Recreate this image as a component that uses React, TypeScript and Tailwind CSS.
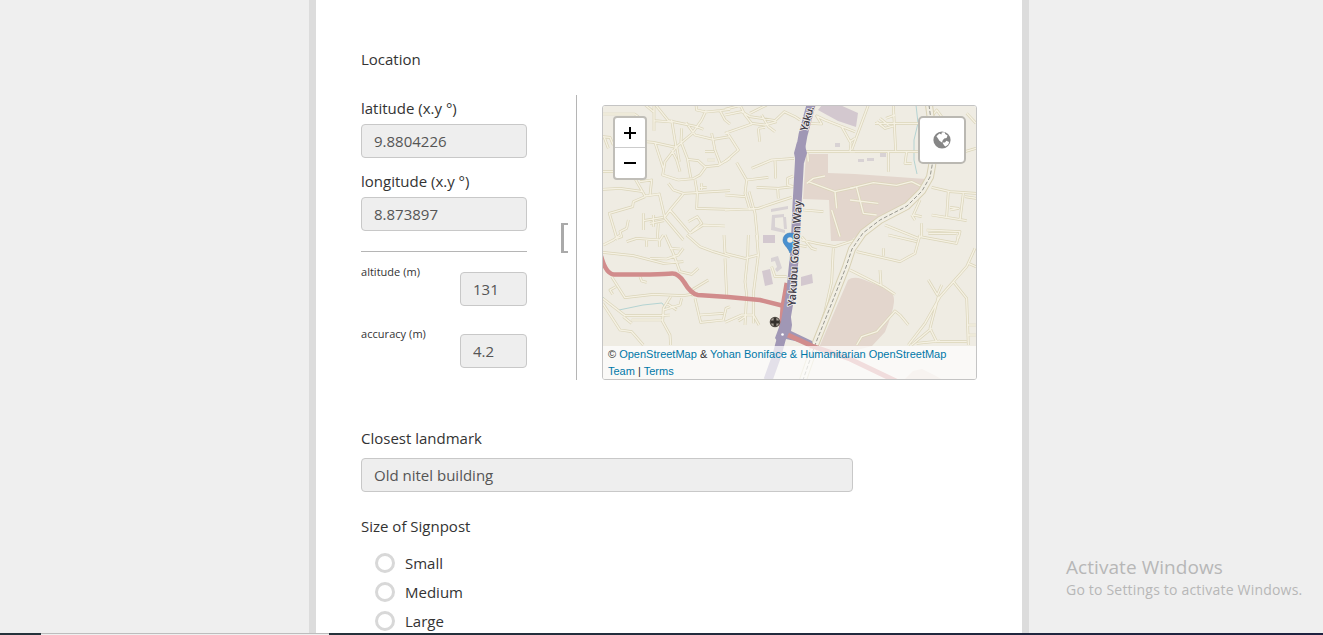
type Tile = { x: number; y: number; roads: string };

// Minor streets, in thirds of a pixel relative to each tile's corner.
const tiles: Tile[] = [
  {
    x: 600,
    y: 100,
    roads:
      "M8 42H104L125 58M162 15V92M136 15L160 35M167 15L205 62L290 80L310 88M162 62L215 66M215 60L228 140M135 125L160 127L228 142L275 102L305 60L318 32M288 15L290 30L318 36L360 32L390 28M360 32L375 60L390 72M258 68L285 105L340 118L390 110M228 142L195 185L188 225L235 240L280 236L300 225L318 200L355 196L390 175M165 128L190 205M245 85L243 125L262 175L272 232M262 178L295 182L315 200M215 150L230 180L240 215M230 140L238 185M335 100L345 150L362 195M315 155H342M322 180H345M8 110L30 112L40 135M12 110L25 145M8 215H42M8 268L60 265L130 275M105 236L135 288L178 282L195 355L250 420M120 245L155 240L150 285M135 290L100 305L98 320L28 340L52 420M205 250L220 270L250 280L390 272M285 240L292 280L290 325L390 328M300 262H320M305 250V270M250 282L210 330L195 350M210 330L270 400M265 365L292 350L305 370L275 395M270 400L310 375L375 378M130 340V390M160 345V380M130 362L190 352M150 370L192 362M175 370L172 415M85 360L80 385L60 395L65 410L50 415",
  },
  {
    x: 725,
    y: 100,
    roads:
      "M0 28L50 15M0 45L50 35L75 50L110 55L150 62L178 35L210 50L225 60M45 15L60 45L80 70L120 75L155 65M110 45L130 80L150 95M100 85L104 125M100 85L120 82M0 100L80 72M5 95L40 150L0 185M125 15L75 40M80 205L140 180L207 175M150 180L152 235M35 188L65 240L130 232M65 240L60 280L75 330M95 262L160 265L205 260M158 265L160 295M0 285L60 290M0 330L100 325L160 305L200 292M72 275L90 340L98 420M205 228L188 235L188 255L205 260M240 155H390M245 250L265 235L300 228M250 245L330 275L390 262M330 275L335 325M250 70L290 72L275 48L300 60L390 95M350 80L378 130L375 155M390 115L375 125M235 330L295 335M248 160L250 185M320 330L345 410",
  },
  {
    x: 850,
    y: 100,
    roads:
      "M55 15L5 150M130 15L137 152M0 155H205M75 70H210M80 65L105 85L130 78M90 55L115 75M108 55L135 45M115 155V215M170 155L165 190L185 190M345 155L378 145M275 50L260 30L245 50M350 40L378 70M0 265L70 248L140 256L185 245L220 262M20 262L40 340L80 345M0 300L85 310M245 262L300 275L378 280M295 275L290 350M340 280L330 360M245 345L350 362M300 322L325 325L300 330M210 300L190 345L215 350M185 345L195 360M105 375L205 415M215 370V410M230 390L330 395L325 415M235 400H320M378 295L345 290",
  },
  {
    x: 600,
    y: 235,
    roads:
      "M8 52L100 62L190 85L250 80M10 30L40 15L60 0M80 20L110 10L180 15L190 0M178 15V35M140 15V35M150 70L200 72L235 60L250 40M195 0L220 55L240 110L275 118L295 100M260 0L300 35L340 50L390 65M375 55L372 0M210 40L240 42M35 125L75 188L160 178L250 182L275 178M275 165L325 135M120 125L125 138L140 142M48 155L30 165L38 178M8 205L60 285L95 290L130 330M8 190L75 242L180 242L210 240M95 255H190M70 245L95 265M212 185L190 220L188 260L210 300L212 330M190 225L240 210L245 190M200 205L230 225M285 190L302 262L370 255L378 220L390 215M300 240L370 235M280 185L275 170",
  },
  {
    x: 725,
    y: 235,
    roads:
      "M0 55L60 70L100 60M70 0L68 65L60 140L65 180L60 270M0 70L5 180M95 0L100 60L85 175L85 265M0 262L50 240L85 240L102 270M40 258L60 245M140 95L150 125L185 125M230 15L275 25L330 35L390 15M325 40L320 140L300 230L270 320M230 5L260 40L275 45M215 30L245 35",
  },
  {
    x: 850,
    y: 235,
    roads:
      "M0 105L100 155L135 178M90 105L93 150M20 50L150 80L195 55L210 0M100 40V62M115 0L200 20M210 5L320 25L325 0M20 330L35 305L80 290L135 228L150 240L175 270M375 40L350 95L270 185L225 265L175 330M310 140L350 190L355 330M235 135L262 180L275 150M265 185L240 280L260 320L350 320M245 280L185 330M200 325L270 318M355 85L378 95M355 270H378M355 300H378",
  },
];

function Streets({ stroke, width }: { stroke: string; width: number }) {
  return (
    <>
      {tiles.map((t) => (
        <path
          key={`${t.x}-${t.y}`}
          d={t.roads}
          transform={`translate(${t.x} ${t.y}) scale(.33333)`}
          stroke={stroke}
          strokeWidth={width}
          strokeLinejoin="round"
          fill="none"
        />
      ))}
    </>
  );
}

const railway =
  "M929 105L931 120L934 150L932 166L930 177L922 191L907 206L880 220L863 233L852 249L846 267L833 300L815 345L803 380";
const highway = "M811 105L803 135L800 152L797 205L795 250L791 290L785 325L777 355L768 380";

function StreetMap() {
  return (
    <svg viewBox="603 106 373 273" className="block h-full w-full">
      <rect x="602" y="105" width="376" height="276" fill="#efece3" />
      <path
        d="M806 154H828V173L855 174L926 179L915 196L895 213L870 226L850 241H831L829 200L803 199Z"
        fill="#e3d6cd"
      />
      <path d="M848 280Q853 276 862 279L882 287Q895 291 894 302Q893 312 885 332L872 346L850 352L818 350Z" fill="#e3d6cd" />
      <path
        d="M603 297L610 305L619 310L643 305L662 303L667 310M916 105L918 123L914 140V160L917 174"
        stroke="#b4d3d2"
        fill="none"
        strokeWidth="1"
      />
      <Streets stroke="#dad4b9" width={8.2} />
      <Streets stroke="#f5f1e3" width={4.2} />
      <g fill="#d3c8cf">
        <path d="M818 110L822 105H840L858 113L856 127L838 121Z" />
        <path d="M763 235h12v8h-12zM762 271l8-2 3 15-8 2zM801 277l11-3 1 9-12 3z" />
      </g>
      <g fill="#d8d2d4">
        <path d="M835 143h5v4h-5zM858 159h6v3h-6zM867 158h7v3h-7zM880 153h6v4h-6z" />
        <path d="M771 209l17-3v3l-17 3zM772 215l12-1v3l-9 1v9l10 3v3l-14-3zM783 217l3 0 1 12-3 0zM771 258l7-2 4 12-5 4-2-3 2-2-2-6-4 1z" />
      </g>
      <path d={railway} stroke="#d8d1b5" strokeWidth="8" fill="none" strokeLinejoin="round" />
      <path d={railway} stroke="#f1eee3" strokeWidth="6" fill="none" strokeLinejoin="round" />
      <path d={railway} stroke="#96968f" strokeWidth="1" strokeDasharray="4 2" fill="none" />
      <g fill="none" stroke="#d18c8c" strokeLinejoin="round">
        <path
          d="M601 256Q606 274 614 274.5L650 274.5Q667 274 672 273.5Q678 273 684 282Q691 294 698 295L728 297L760 300L784 306"
          strokeWidth="4.6"
        />
        <path d="M787 283L783 306L781 335" strokeWidth="5" />
      </g>
      <path d={highway} stroke="#a097b5" strokeWidth="9" fill="none" strokeLinejoin="round" />
      <path
        d="M797 142L804 142L807 153L804 163H796L794 153ZM781 322L790 310L792 325L791 331L812 341L813 345L786 339L780 345L775 338Z"
        fill="#a097b5"
      />
      <path d="M788 335L812 346L850 359L898 382" fill="none" stroke="#d18c8c" strokeWidth="5" />
      <path d="M905 379L913 371L922 369L936 376L941 379Z" fill="#e3d6cd" />
      <circle cx="782.5" cy="334.5" r="1.3" fill="#fff" />
      <g transform="translate(775 322)">
        <circle r="5.3" fill="#5d574f" />
        <circle r="4.2" fill="#aaa49b" />
        <path d="M-1.4-4.4h2.8v3h3v2.8h-3v3h-2.8v-3h-3v-2.8h3z" fill="#35312c" />
      </g>
      <path
        d="M790 253C788 247 783 245 783 240A7 7 0 0 1 797 240C797 245 792 247 790 253Z"
        fill="#4990cf"
        stroke="#3978b6"
        strokeWidth=".6"
      />
      <circle cx="790" cy="240" r="2.8" fill="#efece3" />
      <g
        fontFamily="'Noto Sans', sans-serif"
        fontWeight="600"
        fill="#43404b"
        stroke="#f6f3ef"
        strokeWidth="1.6"
        paintOrder="stroke"
        strokeLinejoin="round"
      >
        <text transform="translate(795.5 306.5) rotate(-86.5)" fontSize="11" textLength="106">
          Yakubu Gowon Way
        </text>
        <text transform="translate(807 132) rotate(-74)" fontSize="10.5" textLength="25.5">
          Yaku.
        </text>
      </g>
    </svg>
  );
}

function Globe() {
  return (
    <svg width="18" height="18" viewBox="0 0 18 18">
      <circle cx="9" cy="9" r="8.6" fill="#868686" />
      <path
        d="M3.4 5.2L6.4 2.6L8.4 3.6L8.8 1.6L11.6 1.2L12.2 3L14.6 4.4L13.6 7L11.2 7.6L9.6 9.4L9 11.6L6.4 9.8L5 7.6Z"
        fill="#fff"
      />
      <path d="M9.4 11.6L12 11.4L13.4 9.8L16.2 11L15.2 13.6L12.6 15.6L11.2 14.4Z" fill="#fff" />
    </svg>
  );
}

function Field({ value, className }: { value: string; className: string }) {
  return (
    <input
      readOnly
      value={value}
      className={`block h-[34px] rounded-[4px] border border-[#c8c8c8] bg-[#eee] px-3 pb-px text-[15px] text-[#555] outline-none ${className}`}
    />
  );
}

function Radio({ label }: { label: string }) {
  return (
    <label className="flex h-[29px] items-center gap-[10px]">
      <span className="h-5 w-5 rounded-full border-[3px] border-[#d8d8d8] bg-white" />
      <span className="leading-5">{label}</span>
    </label>
  );
}

export default function App() {
  return (
    <div className="relative h-[635px] w-[1323px] overflow-hidden bg-[#efefef] font-['Open_Sans',sans-serif] text-[15px] leading-5 text-[#333]">
      <main className="ml-[309px] h-[635px] w-[720px] border-x-[7px] border-[#dcdcdc] bg-white pl-[45px] pt-[49px]">
        <div>Location</div>
        <div className="mt-[26px] flex">
          <div className="w-[166px] pt-[3px]">
            <div>latitude (x.y °)</div>
            <Field value="9.8804226" className="mt-[6px] w-full" />
            <div className="mt-[13px]">longitude (x.y °)</div>
            <Field value="8.873897" className="mt-[6px] w-full" />
            <div className="mt-5 border-t border-[#b5b5b5]" />
            <div className="mt-5 flex justify-between">
              <span className="-mt-[10px] text-[11px] tracking-[0.02px]">altitude (m)</span>
              <Field value="131" className="w-[67px]" />
            </div>
            <div className="mt-7 flex justify-between">
              <span className="-mt-[10px] text-[11px] tracking-[0.05px]">accuracy (m)</span>
              <Field value="4.2" className="w-[67px]" />
            </div>
          </div>
          <div className="ml-[34px] flex h-[285px] w-4 items-center border-r border-[#b5b5b5]">
            <div className="h-[30px] w-[7px] border-y-2 border-l-[3px] border-[#aaa]" />
          </div>
          <div className="relative ml-[25px] mt-[10px] h-[275px] w-[375px] overflow-hidden rounded-[3px] border border-[#c4c4c4]">
            <StreetMap />
            <div className="absolute left-[10px] top-[10px] flex h-[64px] w-[34px] flex-col rounded-[4px] border-2 border-[#c0beb8] bg-white">
              <button className="flex h-[30px] items-center justify-center border-b border-[#ccc] pt-px">
                <svg width="12" height="12" stroke="#000" strokeWidth="2">
                  <path d="M6 0V12M0 6H12" />
                </svg>
              </button>
              <button className="flex h-[30px] items-center justify-center">
                <svg width="14" height="12" stroke="#000" strokeWidth="2">
                  <path d="M1 6H13" />
                </svg>
              </button>
            </div>
            <div className="absolute right-[10px] top-[10px] flex h-[48px] w-[48px] items-center justify-center rounded-[5px] border-2 border-[#bab8b2] bg-white pb-px pr-px">
              <Globe />
            </div>
            <div className="absolute bottom-0 left-0 w-full whitespace-nowrap bg-white/70 pl-[5px] font-['Liberation_Sans',sans-serif] text-[11px] leading-[16.5px] text-[#333]">
              © <span className="text-[#0078a8]">OpenStreetMap</span> &amp;{" "}
              <span className="text-[#0078a8]">Yohan Boniface &amp; Humanitarian OpenStreetMap</span>
              <br />
              <span className="text-[#0078a8]">Team</span> | <span className="text-[#0078a8]">Terms</span>
            </div>
          </div>
        </div>
        <div className="mt-[48px]">Closest landmark</div>
        <Field value="Old nitel building" className="mt-[10px] w-[492px]" />
        <div className="mt-[24px]">Size of Signpost</div>
        <div className="ml-[14px] mt-[12px]">
          <Radio label="Small" />
          <Radio label="Medium" />
          <Radio label="Large" />
        </div>
      </main>
      <div className="absolute left-[1066px] top-[555px] whitespace-nowrap text-[#b7b7b7]">
        <div className="text-[19px] leading-6 tracking-[0.06px]">Activate Windows</div>
        <div className="text-[14px] leading-[22px] tracking-[0.2px]">Go to Settings to activate Windows.</div>
      </div>
      <div className="absolute bottom-0 left-0 flex h-[2px] w-full">
        <div className="w-[41px] bg-[#25323b]" />
        <div className="w-[288px] border-t border-[#bdbdbd] bg-[#efefef]" />
        <div className="flex-1 bg-gradient-to-r from-[#25323b] to-[#1e2140]" />
      </div>
    </div>
  );
}
